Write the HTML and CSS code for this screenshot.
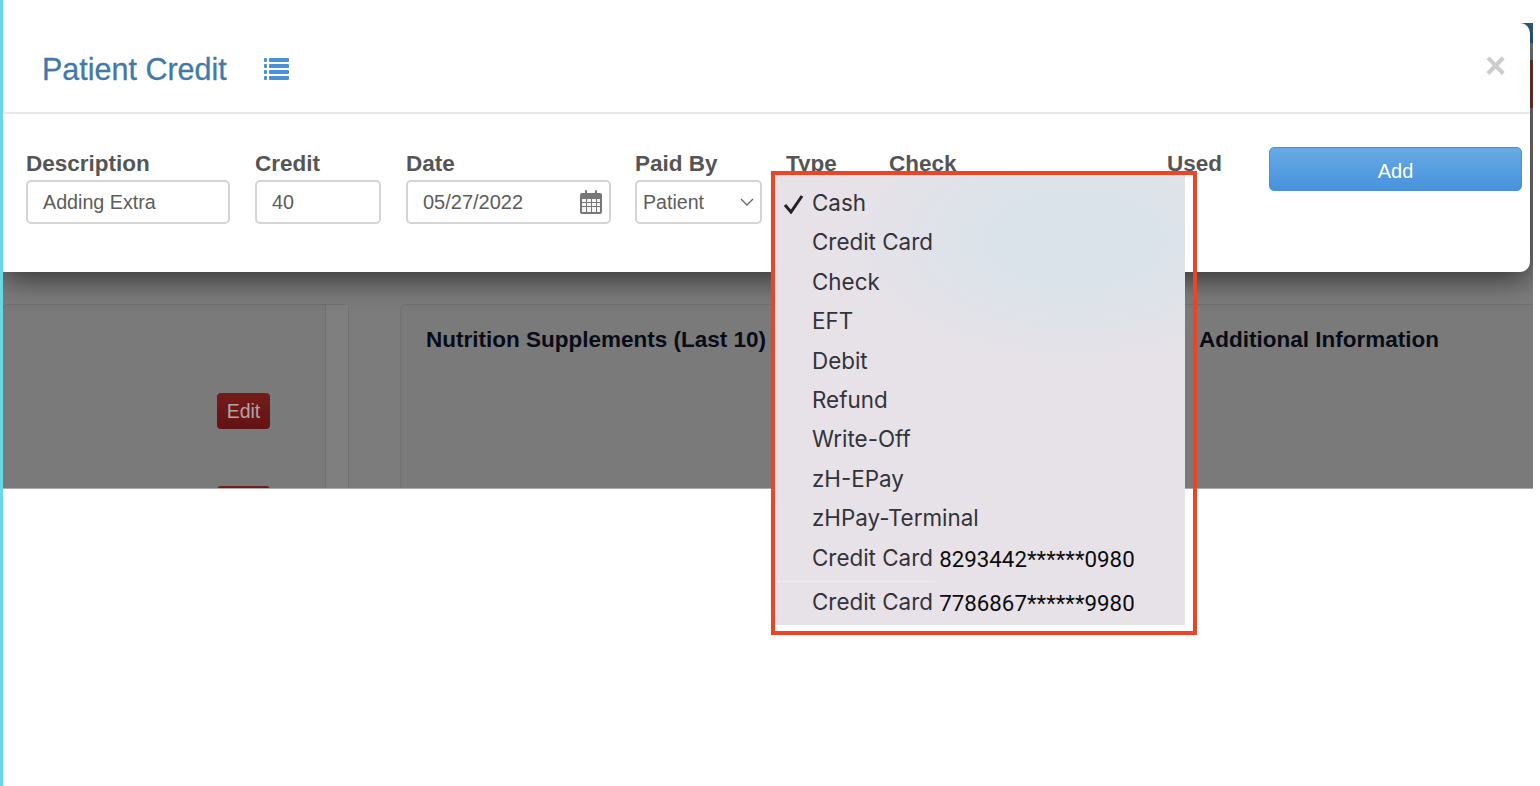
FILE: index.html
```html
<!DOCTYPE html>
<html lang="en">
<head>
  <meta charset="UTF-8">
  <title>Patient Credit</title>
  <link rel="stylesheet" href="styles.css">
</head>
<body>
  <div class="page">
    <div class="backdrop">
      <div class="panels">
        <div class="panel panel-left">
          <div class="edit-col">
            <button class="edit-btn">Edit</button>
            <button class="edit-btn"></button>
          </div>
        </div>
        <div class="panel panel-mid">
          <h4>Nutrition Supplements (Last 10)</h4>
          <h4>Additional Information</h4>
        </div>
      </div>

      <div class="modal">
        <div class="modal-header">
          <h3>Patient Credit</h3>
          <svg class="list-icon" width="25" height="23" viewBox="0 0 25 23">
            <g fill="#4a90d9">
              <rect x="0" y="0" width="3" height="4" rx="1"/>
              <rect x="5" y="0" width="20" height="4" rx="1"/>
              <rect x="0" y="6" width="3" height="4" rx="1"/>
              <rect x="5" y="6" width="20" height="4" rx="1"/>
              <rect x="0" y="12" width="3" height="4" rx="1"/>
              <rect x="5" y="12" width="20" height="4" rx="1"/>
              <rect x="0" y="18" width="3" height="4" rx="1"/>
              <rect x="5" y="18" width="20" height="4" rx="1"/>
            </g>
          </svg>
          <span class="close">&times;</span>
        </div>
        <div class="modal-body">
          <div class="field">
            <label>Description</label>
            <div class="input">Adding Extra</div>
          </div>
          <div class="field">
            <label>Credit</label>
            <div class="input">40</div>
          </div>
          <div class="field">
            <label>Date</label>
            <div class="input input-date">
              05/27/2022
              <svg width="24" height="26" viewBox="0 0 24 26">
                <rect x="1" y="4" width="22" height="21" rx="2" fill="#777"/>
                <rect x="6" y="1" width="2" height="6" rx="1" fill="#777"/>
                <rect x="16" y="1" width="2" height="6" rx="1" fill="#777"/>
                <g fill="#f4f4f4">
                  <rect x="3" y="10" width="4" height="3"/><rect x="8" y="10" width="4" height="3"/><rect x="13" y="10" width="4" height="3"/><rect x="18" y="10" width="3" height="3"/>
                  <rect x="3" y="14" width="4" height="3"/><rect x="8" y="14" width="4" height="3"/><rect x="13" y="14" width="4" height="3"/><rect x="18" y="14" width="3" height="3"/>
                  <rect x="3" y="18" width="4" height="5"/><rect x="8" y="18" width="4" height="5"/><rect x="13" y="18" width="4" height="5"/><rect x="18" y="18" width="3" height="5"/>
                </g>
              </svg>
            </div>
          </div>
          <div class="field">
            <label>Paid By</label>
            <div class="input input-select">
              Patient
              <svg width="14" height="8" viewBox="0 0 14 8"><path d="M1 1l6 6 6-6" fill="none" stroke="#666" stroke-width="1.3"/></svg>
            </div>
          </div>
          <div class="field">
            <label>Type</label>
          </div>
          <div class="field">
            <label>Check</label>
          </div>
          <div class="field">
            <label>Used</label>
          </div>
          <button class="add-btn">Add</button>
        </div>
      </div>
    </div>

    <div class="menu-box">
      <ul class="menu">
        <li>
          <svg class="check" width="22" height="20" viewBox="0 0 22 20"><path d="M2 11l6 7L19 2" fill="none" stroke="#222" stroke-width="3"/></svg>
          Cash
        </li>
        <li>Credit Card</li>
        <li>Check</li>
        <li>EFT</li>
        <li>Debit</li>
        <li>Refund</li>
        <li>Write-Off</li>
        <li>zH-EPay</li>
        <li>zHPay-Terminal</li>
        <li class="card-row">Credit Card <span>8293442******0980</span></li>
        <li class="card-row">Credit Card <span>7786867******9980</span></li>
      </ul>
    </div>
  </div>
</body>
</html>
```
FILE: styles.css
```css
html, body {
  margin: 0;
  padding: 0;
  height: 100%;
  background: #fff;
}

body {
  font-family: "Liberation Sans", Arial, sans-serif;
  overflow: hidden;
}

.page {
  position: relative;
  height: 786px;
  padding-top: 23px;
  border-left: 3px solid #62dbe6;
  box-sizing: border-box;
}

.backdrop {
  position: relative;
  width: 1530px;
  height: 466px;
  padding-top: 281px;
  box-sizing: border-box;
  overflow: hidden;
  border-bottom: 1px solid #aaa;
  /* colours of the page behind show only in the strip right of the modal */
  background: linear-gradient(#2f6188 20px, #858585 20px, #858585 37px, #7a3f28 37px, #7a3f28 85px, #7c7c7c 85px);
}

.panels {
  display: flex;
  gap: 51px;
}

.panel {
  height: 220px;
  background: #7a7a7a;
  border: 1px solid #707070;
  border-radius: 6px;
  box-sizing: border-box;
}

.panel-left {
  width: 347px;
  margin-left: -1px;
  display: flex;
  justify-content: flex-end;
}

.edit-col {
  width: 22px;
  border-left: 1px solid #707070;
  background: #7f7f7f;
  position: relative;
}

.edit-btn {
  position: absolute;
  right: 78px;
  top: 88px;
  width: 53px;
  height: 36px;
  background: linear-gradient(#741c1c, #621313);
  color: #b3a3a3;
  border: none;
  border-radius: 4px;
  font-family: inherit;
  font-size: 19.5px;
  padding: 0;
}

.edit-btn + .edit-btn {
  top: 181px;
}

.panel-mid {
  flex: 1;
  display: flex;
  padding: 22px 25px;
  margin-right: -8px;
}

.panel-mid h4 {
  margin: 0;
  font-size: 22.5px;
  line-height: 26px;
  color: #080c16;
}

.panel-mid h4 + h4 {
  margin-left: 433px;
}

.modal {
  position: absolute;
  top: 0;
  left: 0;
  width: 1527px;
  height: 249px;
  background: #fff;
  border-radius: 0 10px 10px 0;
  box-shadow: 0 6px 30px rgba(0, 0, 0, 0.62);
}

.modal-header {
  height: 91px;
  padding: 3px 0 0 39px;
  border-bottom: 2px solid #e8e8e8;
  box-sizing: border-box;
  display: flex;
  align-items: center;
  position: relative;
}

.modal-header h3 {
  margin: 0;
  font-size: 30.5px;
  font-weight: normal;
  color: #4279a9;
  -webkit-text-stroke: 0.3px #4279a9;
}

.list-icon {
  margin-left: 37px;
}

.close {
  position: absolute;
  right: 24px;
  top: 25px;
  font-size: 36px;
  line-height: 36px;
  font-weight: bold;
  color: #ccc;
}

.modal-body {
  display: grid;
  grid-template-columns: 205px 127px 205px 127px 79px 254px 78px 253px;
  column-gap: 24px;
  padding: 37px 0 0 23px;
}

.field label {
  display: block;
  font-size: 22.5px;
  line-height: 26px;
  font-weight: bold;
  color: #555;
  margin-bottom: 3px;
}

.field:nth-child(-n+2) .input {
  margin-right: 1px;
}

.input {
  height: 44px;
  box-sizing: border-box;
  border: 2px solid #d4d4d4;
  border-radius: 5px;
  padding: 0 15px;
  font-size: 19.7px;
  line-height: 40px;
  color: #5c5c5c;
  display: flex;
  align-items: center;
  justify-content: space-between;
}

.input-date {
  padding-right: 6px;
  font-size: 20px;
}

.input-select {
  padding: 0 6px;
  font-size: 19.6px;
}

.add-btn {
  height: 44px;
  margin-top: -4px;
  background: linear-gradient(#68abe4, #4792dc);
  border: 1px solid #4a90d9;
  border-radius: 5px;
  color: #fff;
  font-family: inherit;
  font-size: 20px;
  padding: 4px 0 0;
}

.menu-box {
  position: absolute;
  left: 768px;
  top: 171px;
  width: 426px;
  height: 464px;
  border: 4px solid #ee4426;
  box-sizing: border-box;
}

.menu {
  list-style: none;
  margin: 0;
  padding: 8px 0 0;
  width: 410px;
  height: 450px;
  box-sizing: border-box;
  background: radial-gradient(ellipse 240px 130px at 300px 64px, #dae3ea 30%, #e7e2e8 100%);
  font-family: Inter, "Noto Sans", sans-serif;
  font-size: 22.4px;
  color: #33333a;
}

.menu li {
  position: relative;
  height: 39.4px;
  line-height: 39.4px;
  padding-left: 37px;
}

.check {
  position: absolute;
  left: 8px;
  top: 11px;
}

.menu .card-row {
  height: 44px;
  line-height: 40px;
}

/* faint rule under the first saved card, only as wide as the pasted label */
.menu .card-row:nth-child(10)::after {
  content: "";
  position: absolute;
  left: 0;
  bottom: 0;
  width: 160px;
  height: 1px;
  background: #efeaf0;
}

.card-row span {
  font-family: Roboto, sans-serif;
  font-size: 22.3px;
  color: #0c0c0c;
  position: relative;
  top: 1px;
}
```
